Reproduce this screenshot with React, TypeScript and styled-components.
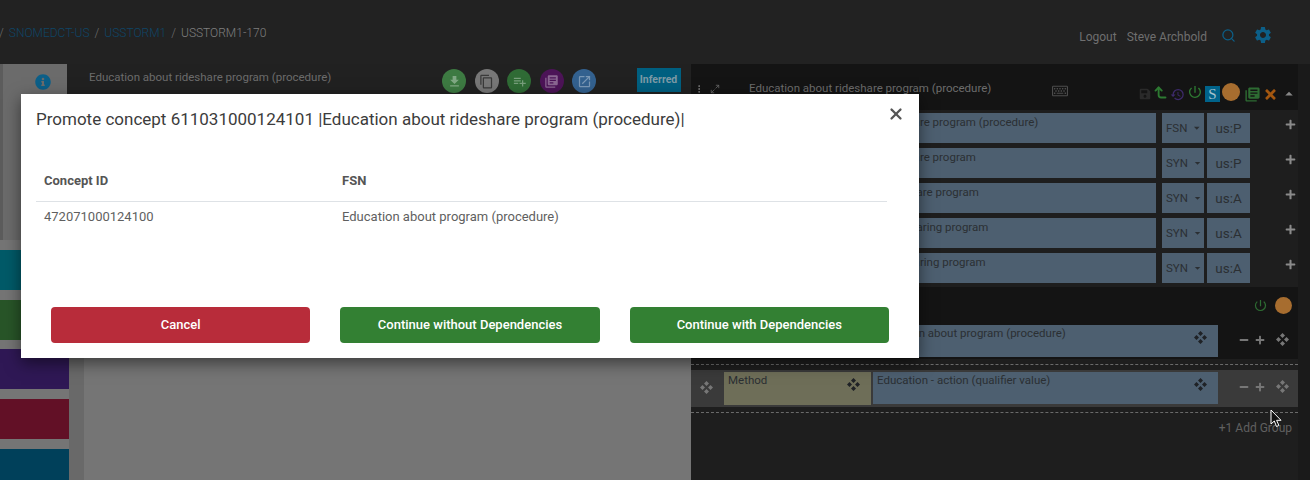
import styled, { createGlobalStyle } from "styled-components";
import {
  FaInfoCircle,
  FaRegKeyboard,
  FaSave,
  FaTimes,
  FaPlus,
  FaMinus,
} from "react-icons/fa";
import {
  MdFileDownload,
  MdContentCopy,
  MdPlaylistAdd,
  MdLibraryBooks,
  MdOpenInNew,
  MdHistory,
  MdPowerSettingsNew,
  MdSettings,
  MdArrowDropDown,
  MdArrowDropUp,
} from "react-icons/md";
import { Search, CornerLeftUp, X, MoreVertical, Maximize2 } from "lucide-react";

const GlobalStyle = createGlobalStyle`
  html, body {
    margin: 0;
    padding: 0;
    height: 480px;
    overflow: hidden;
    background: #222;
    font-family: Roboto, "Liberation Sans", sans-serif;
  }
  * { box-sizing: border-box; }
`;

const Page = styled.div`
  position: relative;
  width: 1310px;
  height: 480px;
  overflow: hidden;
  display: flex;
  flex-direction: column;
`;

const TopBar = styled.header`
  height: 64px;
  flex: none;
  background: #222;
  display: flex;
  justify-content: space-between;
  font-size: 12px;
`;
const Crumbs = styled.nav`
  display: flex;
  gap: 5px;
  margin-left: -1px;
  padding-top: 26px;
  line-height: 14px;
  color: #6f6f6f;
  font-weight: 300;
`;
const Crumb = styled.span<{ $link?: boolean }>`
  color: ${(p) => (p.$link ? "#0f4566" : "#7f7f7f")};
`;
const UserBar = styled.div`
  display: flex;
  align-items: center;
  padding: 9px 37px 0 0;
  color: #6f6f6f;
`;
const UserLink = styled.span`
  margin-right: 9px;
`;
const LogoutLink = styled(UserLink)`
  margin-right: 10px;
`;
const SearchIcon = styled(Search)`
  margin: -3px 0 0 5px;
  color: #0c5f88;
`;
const GearIcon = styled(MdSettings)`
  margin: -3px 0 0 17px;
  color: #0c5f88;
`;

const Body = styled.main`
  flex: 1;
  display: flex;
  min-height: 0;
`;

const LeftPane = styled.section`
  width: 691px;
  flex: none;
  display: flex;
  background: #757575;
`;
const Sidebar = styled.aside`
  width: 69px;
  flex: none;
  display: flex;
  flex-direction: column;
  gap: 9.75px;
  background: #757575;
`;
const InfoBox = styled.div`
  height: 176px;
  flex: none;
  margin: 0 2px 0 0;
  padding: 10px 0 0 16px;
  border-left: 3px solid #5c5c5c;
  background: #6b6b6b;
  text-align: center;
  color: #0c5f88;
  font-size: 16px;
  line-height: 16px;
`;
const Tile = styled.div<{ $color: string }>`
  height: 40px;
  flex: none;
  background: ${(p) => p.$color};
`;
const Gutter = styled.div`
  width: 15px;
  flex: none;
  background: #696969;
`;
const LeftMain = styled.div`
  flex: 1;
  display: flex;
  flex-direction: column;
`;
const LeftHeader = styled.div`
  height: 46px;
  background: #212121;
  margin-left: -17px;
  padding: 0 10px 0 22px;
  display: flex;
  align-items: flex-start;
  font-size: 11.5px;
  color: #6c6c6c;
`;
const LeftTitle = styled.span`
  width: 353px;
  padding-top: 6px;
  line-height: 14px;
`;
const Round = styled.span<{ $color: string }>`
  width: 24px;
  height: 24px;
  margin: 5px 8.5px 0 0;
  border-radius: 50%;
  flex: none;
  display: flex;
  align-items: center;
  justify-content: center;
  background: ${(p) => p.$color};
  color: rgba(255, 255, 255, 0.35);
`;
const Inferred = styled.span`
  margin: 4px 0 0 32px;
  width: 44px;
  height: 24px;
  line-height: 24px;
  text-align: center;
  background: #005f80;
  color: #7d9aa6;
  font-size: 10.5px;
  font-weight: 700;
`;

const RightPane = styled.section`
  flex: 1;
  display: flex;
  background: #1a1a1a;
`;
const RightMain = styled.div`
  width: 607px;
  background: #1e1e1e;
  font-size: 11.5px;
  color: #2b2f33;
`;
const ConceptHeader = styled.div`
  height: 46px;
  background: #141414;
  display: flex;
  align-items: flex-start;
  color: #6c6c6c;
`;
const HeaderTools = styled.div`
  width: 58px;
  flex: none;
  padding: 20px 0 0 3px;
  display: flex;
  gap: 6px;
  color: #666;
`;
const ConceptTitle = styled.span`
  width: 303px;
  padding-top: 17px;
  line-height: 14px;
`;
const KeyboardIcon = styled(FaRegKeyboard)`
  margin-top: 19px;
  color: #4c4c4c;
`;
const StatusIcons = styled.div`
  margin-left: 71px;
  padding-top: 14px;
  height: 46px;
  display: flex;
  align-items: center;
  gap: 2px;
`;
const STile = styled.span`
  width: 15px;
  height: 16px;
  background: #00638a;
  color: #a6c1cc;
  font: 15px/16px "Liberation Serif", serif;
  text-align: center;
`;
const Dot = styled.span<{ $size: number; $lift?: boolean }>`
  width: ${(p) => p.$size}px;
  height: ${(p) => p.$size}px;
  margin-top: ${(p) => (p.$lift ? "-4px" : "0")};
  border-radius: 50%;
  background: #a76d2f;
`;
const LiftedPower = styled(MdPowerSettingsNew)`
  margin-top: -4px;
`;
const LiftedUp = styled(CornerLeftUp)`
  margin-top: -4px;
`;
const CopyIcon = styled(MdLibraryBooks)`
  margin-left: 2px;
`;

const DescRow = styled.div`
  height: 35px;
  padding: 3px 0 0 99px;
  display: flex;
`;
const DescField = styled.div`
  width: 366px;
  height: 30px;
  padding: 2px 4px 2px 6px;
  line-height: 14px;
  background: #4d5f70;
`;
const TypeField = styled.div`
  width: 42px;
  height: 30px;
  margin-left: 6px;
  padding-left: 4px;
  display: flex;
  align-items: center;
  background: #4d5f70;
`;
const LangField = styled.div`
  width: 43px;
  height: 30px;
  margin-left: 3px;
  text-align: center;
  line-height: 31px;
  font-size: 13.5px;
  background: #4d5f70;
`;
const CaretIcon = styled(MdArrowDropDown)`
  margin-left: 3px;
  color: #2b2f33;
`;
const PlusBtn = styled.span`
  margin-left: 35px;
  padding-top: 6px;
  color: #8a8a8a;
`;

const GroupHeader = styled.div`
  height: 35px;
  margin-top: 2px;
  background: #141414;
  display: flex;
  justify-content: flex-end;
  align-items: center;
  gap: 7px;
  padding: 2px 6px 0 0;
`;

const AttrRow = styled.div<{ $light?: boolean }>`
  height: 37px;
  padding: ${(p) => (p.$light ? "2px" : "3px")} 0 0 33px;
  display: flex;
  background: ${(p) => (p.$light ? "#3a3a3a" : "#141414")};
`;
const Handle = styled.span`
  width: 0;
  position: relative;
  left: -24px;
  top: 9px;
`;
const AttrField = styled.div<{ $tone: "type" | "value"; $width: number }>`
  position: relative;
  width: ${(p) => p.$width}px;
  height: ${(p) => (p.$tone === "type" ? "33px" : "32px")};
  margin-right: 2px;
  padding: 1px 4px;
  line-height: 14px;
  background: ${(p) => (p.$tone === "type" ? "#6e6e58" : "#4d5f70")};
`;
const FieldMove = styled.span`
  position: absolute;
  right: 11px;
  top: 6px;
`;
const AttrTools = styled.div`
  margin-left: 19px;
  padding-top: 8px;
  display: flex;
  align-items: flex-start;
  gap: 6px;
  color: #777;
`;
const ToolGlyph = styled.span`
  height: 13px;
  display: flex;
  align-items: center;
`;
const ToolMove = styled.span`
  margin-left: 5px;
`;
const Dashed = styled.div`
  height: 1px;
  margin: 5px 0;
  border-top: 1px dashed #6a6a6a;
`;
const AddGroup = styled.div`
  padding: 3px 6px 0 0;
  text-align: right;
  line-height: 15px;
  font-size: 12px;
  color: #606060;
`;

const Cursor = styled.svg`
  position: absolute;
  left: 1270px;
  top: 409px;
`;

const Modal = styled.div`
  position: absolute;
  left: 21px;
  top: 94px;
  width: 898px;
  height: 264px;
  padding: 0 15px;
  background: #fff;
  box-shadow: 0 5px 15px rgba(0, 0, 0, 0.5);
  color: #555;
`;
const ModalTitle = styled.h4`
  margin: 0;
  padding-top: 15px;
  font-size: 17px;
  font-weight: 400;
  line-height: 20px;
  color: #3c3c3c;
`;
const CloseBtn = styled(X)`
  position: absolute;
  right: 14px;
  top: 11px;
  color: #555;
`;
const Table = styled.table`
  width: 851px;
  margin-top: 28px;
  border-collapse: collapse;
  font-size: 13px;
  table-layout: fixed;

  th {
    height: 44px;
    padding: 16px 8px 0;
    vertical-align: top;
    line-height: 16px;
    text-align: left;
    font-weight: 700;
    color: #555;
    border-bottom: 1px solid #dee2e6;
  }
  td {
    height: 30px;
    padding: 1px 8px 0;
    color: #5f5f5f;
  }
`;
const ModalActions = styled.div`
  position: absolute;
  left: 30px;
  right: 30px;
  bottom: 15px;
  display: flex;
  gap: 30px;
`;
const ActionBtn = styled.button<{ $danger?: boolean }>`
  flex: 1;
  height: 36px;
  padding: 0 0 2px;
  border: none;
  border-radius: 4px;
  background: ${(p) => (p.$danger ? "#b82c3a" : "#338033")};
  color: #fff;
  font: 500 13px Roboto, sans-serif;
`;

const MoveIcon = ({ color = "#777" }: { color?: string }) => (
  <svg width="13" height="13" viewBox="0 0 13 13" fill={color}>
    <path d="M6.5 0 9 2.5 6.5 5 4 2.5zM6.5 8 9 10.5 6.5 13 4 10.5zM2.5 4 5 6.5 2.5 9 0 6.5zM10.5 4 13 6.5 10.5 9 8 6.5z" />
  </svg>
);

const descriptions = [
  { term: "Education about rideshare program (procedure)", type: "FSN", lang: "us:P" },
  { term: "Education about rideshare program", type: "SYN", lang: "us:P" },
  { term: "Education about ride share program", type: "SYN", lang: "us:A" },
  { term: "Education about ride sharing program", type: "SYN", lang: "us:A" },
  { term: "Education about ridesharing program", type: "SYN", lang: "us:A" },
];

const tiles = ["#005a68", "#285528", "#2f1855", "#621026", "#00405a"];

const App = () => {
  return (
    <Page>
      <GlobalStyle />
      <TopBar>
        <Crumbs>
          <span>/</span>
          <Crumb $link>SNOMEDCT-US</Crumb>
          <span>/</span>
          <Crumb $link>USSTORM1</Crumb>
          <span>/</span>
          <Crumb>USSTORM1-170</Crumb>
        </Crumbs>
        <UserBar>
          <LogoutLink>Logout</LogoutLink>
          <UserLink>Steve Archbold</UserLink>
          <SearchIcon size={15} />
          <GearIcon size={20} />
        </UserBar>
      </TopBar>
      <Body>
        <LeftPane>
          <Sidebar>
            <InfoBox>
              <FaInfoCircle />
            </InfoBox>
            {tiles.map((color) => (
              <Tile key={color} $color={color} />
            ))}
          </Sidebar>
          <Gutter />
          <LeftMain>
            <LeftHeader>
              <LeftTitle>Education about rideshare program (procedure)</LeftTitle>
              <Round $color="#3d7a42">
                <MdFileDownload size={15} />
              </Round>
              <Round $color="#777">
                <MdContentCopy size={15} color="#3a3a3a" />
              </Round>
              <Round $color="#2f6b35">
                <MdPlaylistAdd size={15} />
              </Round>
              <Round $color="#4c1457">
                <MdLibraryBooks size={15} />
              </Round>
              <Round $color="#33618f">
                <MdOpenInNew size={15} />
              </Round>
              <Inferred>Inferred</Inferred>
            </LeftHeader>
          </LeftMain>
        </LeftPane>
        <RightPane>
          <RightMain>
            <ConceptHeader>
              <HeaderTools>
                <MoreVertical size={10} color="#888" />
                <Maximize2 size={10} />
              </HeaderTools>
              <ConceptTitle>Education about rideshare program (procedure)</ConceptTitle>
              <KeyboardIcon size={16} />
              <StatusIcons>
                <FaSave size={12} color="#2a2a2a" />
                <LiftedUp size={15} color="#2d7a32" strokeWidth={3} />
                <MdHistory size={15} color="#3d2a6b" />
                <LiftedPower size={16} color="#2d7a32" />
                <STile>S</STile>
                <Dot $size={18} $lift />
                <CopyIcon size={17} color="#2d6b32" />
                <FaTimes size={15} color="#a3560f" />
                <MdArrowDropUp size={18} color="#888" />
              </StatusIcons>
            </ConceptHeader>
            {descriptions.map((d) => (
              <DescRow key={d.term}>
                <DescField>{d.term}</DescField>
                <TypeField>
                  {d.type}
                  <CaretIcon size={16} />
                </TypeField>
                <LangField>{d.lang}</LangField>
                <PlusBtn>
                  <FaPlus size={11} />
                </PlusBtn>
              </DescRow>
            ))}
            <GroupHeader>
              <MdPowerSettingsNew size={15} color="#2d6b32" />
              <Dot $size={17} />
            </GroupHeader>
            <AttrRow>
              <Handle>
                <MoveIcon />
              </Handle>
              <AttrField $tone="type" $width={144}>
                <FieldMove>
                  <MoveIcon color="#1f2226" />
                </FieldMove>
              </AttrField>
              <AttrField $tone="value" $width={348}>
                Education about program (procedure)
                <FieldMove>
                  <MoveIcon color="#1f2226" />
                </FieldMove>
              </AttrField>
              <AttrTools>
                <ToolGlyph>
                  <FaMinus size={10} />
                </ToolGlyph>
                <ToolGlyph>
                  <FaPlus size={10} />
                </ToolGlyph>
                <ToolMove>
                  <MoveIcon />
                </ToolMove>
              </AttrTools>
            </AttrRow>
            <Dashed />
            <AttrRow $light>
              <Handle>
                <MoveIcon />
              </Handle>
              <AttrField $tone="type" $width={147}>
                Method
                <FieldMove>
                  <MoveIcon color="#1f2226" />
                </FieldMove>
              </AttrField>
              <AttrField $tone="value" $width={345}>
                Education - action (qualifier value)
                <FieldMove>
                  <MoveIcon color="#1f2226" />
                </FieldMove>
              </AttrField>
              <AttrTools>
                <ToolGlyph>
                  <FaMinus size={10} />
                </ToolGlyph>
                <ToolGlyph>
                  <FaPlus size={10} />
                </ToolGlyph>
                <ToolMove>
                  <MoveIcon />
                </ToolMove>
              </AttrTools>
            </AttrRow>
            <Dashed />
            <AddGroup>+1 Add Group</AddGroup>
          </RightMain>
        </RightPane>
      </Body>
      <Cursor width="12" height="19" viewBox="0 0 12 19">
        <path d="M1 1v14l3.3-3 2.2 5.5 2.4-1-2.3-5.2H11z" fill="#111" stroke="#fff" strokeWidth="1" />
      </Cursor>
      <Modal>
        <ModalTitle>
          Promote concept 611031000124101 |Education about rideshare program (procedure)|
        </ModalTitle>
        <CloseBtn size={18} strokeWidth={3} />
        <Table>
          <colgroup>
            <col width="298" />
            <col />
          </colgroup>
          <thead>
            <tr>
              <th>Concept ID</th>
              <th>FSN</th>
            </tr>
          </thead>
          <tbody>
            <tr>
              <td>472071000124100</td>
              <td>Education about program (procedure)</td>
            </tr>
          </tbody>
        </Table>
        <ModalActions>
          <ActionBtn $danger>Cancel</ActionBtn>
          <ActionBtn>Continue without Dependencies</ActionBtn>
          <ActionBtn>Continue with Dependencies</ActionBtn>
        </ModalActions>
      </Modal>
    </Page>
  );
};

export default App;
